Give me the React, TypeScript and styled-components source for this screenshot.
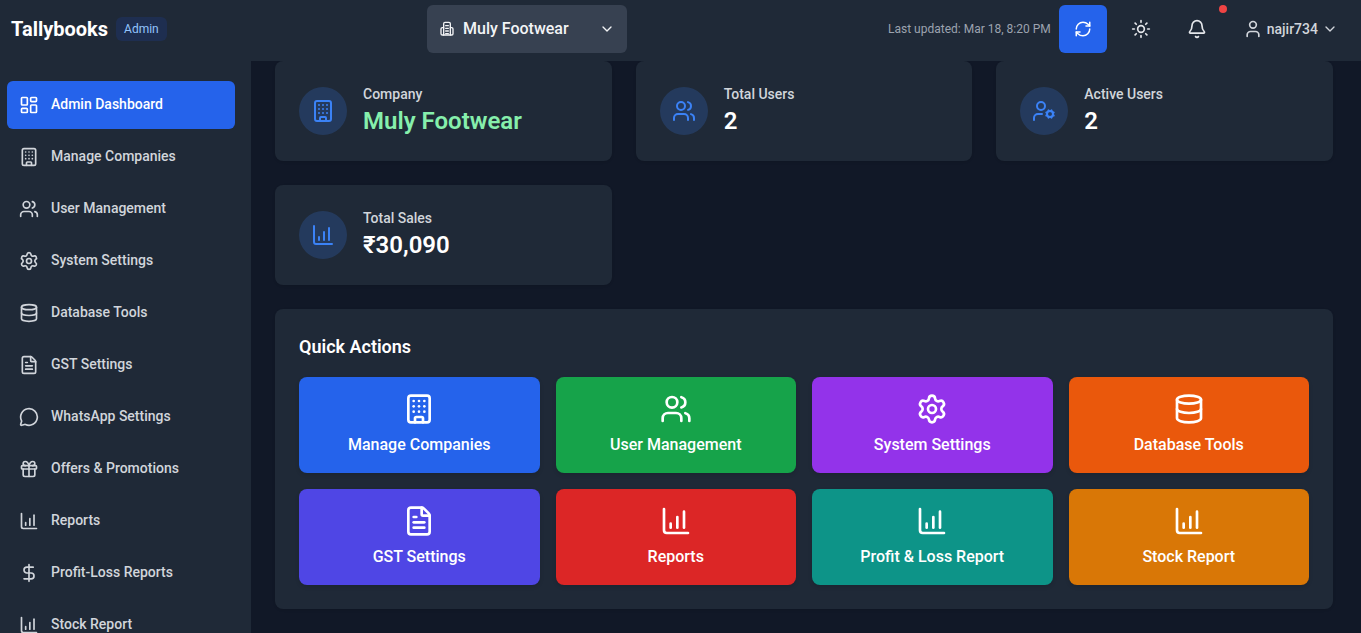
import React from "react";
import styled, { createGlobalStyle } from "styled-components";
import {
  LayoutDashboard, Building, Users, Settings, Database, FileText, MessageCircle, Gift,
  ChartColumnIncreasing, DollarSign, ChevronDown, RefreshCw, Sun, Bell, User, UserCog,
} from "lucide-react";

const Global = createGlobalStyle`
  html, body { margin: 0; padding: 0; height: 100%; overflow: hidden; background: #111827; }
  * { box-sizing: border-box; }
  body { font-family: Roboto, "Liberation Sans", sans-serif; -webkit-font-smoothing: antialiased; }
`;

const Shell = styled.div`
  width: 1361px; height: 633px; display: flex; flex-direction: column; overflow: hidden; background: #111827;
`;
const Header = styled.header`
  height: 61px; flex: none; background: #1f2937; display: flex; align-items: center; padding: 0 23px 3px 11px;
`;
const Brand = styled.div`width: 416px; flex: none; display: flex; align-items: center; gap: 8px;`;
const Logo = styled.span`font-size: 20px; font-weight: 700; color: #fff; line-height: 28px;`;
const Badge = styled.span`
  font-size: 12px; line-height: 16px; color: #93c5fd; padding: 4px 8px; border-radius: 6px; background: rgba(30, 58, 138, 0.3);
`;
const CompanySelect = styled.div`
  width: 200px; height: 48px; flex: none; background: #374151; border-radius: 6px; display: flex; align-items: center; padding: 0 12px; gap: 8px; color: #f3f4f6;
`;
const CompanyName = styled.span`flex: 1; font-size: 16px; font-weight: 500; line-height: 24px;`;
const HeaderRight = styled.div`flex: 1; display: flex; align-items: center; justify-content: flex-end;`;
const Updated = styled.span`font-size: 12px; color: #9ca3af; margin-right: 8px;`;
const RefreshButton = styled.div`
  width: 48px; height: 48px; margin-right: 2px; border-radius: 6px; background: #2563eb; display: flex; align-items: center; justify-content: center; color: #fff;
`;
const IconButton = styled.div`
  position: relative; width: 48px; height: 48px; margin-left: 8px; display: flex; align-items: center; justify-content: center; color: #e5e7eb;
`;
const Dot = styled.span`
  position: absolute; top: 0; right: -6px; width: 8px; height: 8px; border-radius: 50%; background: #ef4444;
`;
const UserMenu = styled.div`
  display: flex; align-items: center; gap: 4px; margin-left: 22px; color: #d1d5db; font-size: 14px; font-weight: 500;
`;
const Body = styled.div`flex: 1; display: flex; min-height: 0;`;
const Sidebar = styled.aside`
  width: 251px; flex: none; background: #1f2937; padding: 20px 12px 240px 7px; overflow-y: scroll; display: flex; flex-direction: column; gap: 4px;
  &::-webkit-scrollbar { width: 4px; }
  &::-webkit-scrollbar-track { background: #1f2937; }
  &::-webkit-scrollbar-thumb { background: #263241; }
`;
const NavItem = styled.div<{ $active?: boolean }>`
  flex: none; width: 228px; height: 48px; border-radius: 6px; display: flex; align-items: center; gap: 12px; padding: 0 12px;
  font-size: 14px; font-weight: 500; color: ${(p) => (p.$active ? "#fff" : "#d1d5db")}; background: ${(p) => (p.$active ? "#2563eb" : "transparent")};
`;
const NavLabel = styled.span`margin-bottom: 2px;`;
const Main = styled.main`flex: 1; padding: 0 28px 0 24px; display: flex; flex-direction: column; gap: 24px; overflow: hidden;`;
const StatGrid = styled.div`display: grid; grid-template-columns: repeat(3, 1fr); gap: 24px;`;
const StatCard = styled.div`
  height: 100px; background: #1f2937; border-radius: 8px; padding: 24px; display: flex; align-items: center; gap: 16px; box-shadow: 0 1px 3px rgba(0, 0, 0, 0.1);
`;
const StatIcon = styled.div`
  width: 48px; height: 48px; flex: none; border-radius: 50%; background: rgba(59, 130, 246, 0.2); display: flex; align-items: center; justify-content: center; color: #3b82f6;
`;
const StatText = styled.div`display: flex; flex-direction: column;`;
const StatLabel = styled.div`font-size: 14px; font-weight: 500; line-height: 20px; color: #d1d5db; margin: -1px 0 1px;`;
const StatValue = styled.div<{ $green?: boolean }>`
  font-size: 24px; font-weight: 600; line-height: 32px; color: ${(p) => (p.$green ? "#86efac" : "#fff")};
`;
const Panel = styled.section`background: #1f2937; border-radius: 8px; padding: 24px; height: 300px; box-shadow: 0 1px 3px rgba(0, 0, 0, 0.1);`;
const PanelTitle = styled.h2`margin: 0 0 16px; font-size: 18px; font-weight: 600; line-height: 28px; color: #fff;`;
const ActionGrid = styled.div`display: grid; grid-template-columns: repeat(4, 1fr); gap: 16px;`;
const ActionCard = styled.div<{ $bg: string }>`
  height: 96px; border-radius: 8px; background: ${(p) => p.$bg}; color: #fff; display: flex; flex-direction: column; align-items: center; justify-content: center; gap: 8px;
  font-size: 16px; font-weight: 500; line-height: 24px; box-shadow: 0 2px 4px rgba(0, 0, 0, 0.12);
`;

const OfficeIcon = () => (
  <svg width="16" height="16" viewBox="0 0 24 24" fill="none" stroke="currentColor" strokeWidth="2" strokeLinecap="round" strokeLinejoin="round">
    <path d="M7 21V4a2 2 0 0 1 2-2h6a2 2 0 0 1 2 2v17" />
    <path d="M7 10H5a2 2 0 0 0-2 2v7a2 2 0 0 0 2 2h14a2 2 0 0 0 2-2v-7a2 2 0 0 0-2-2h-2" />
    <path d="M10 7h4M10 11h4M10 15h4M10 19h4" />
  </svg>
);

const nav = [
  ["Admin Dashboard", LayoutDashboard], ["Manage Companies", Building], ["User Management", Users], ["System Settings", Settings],
  ["Database Tools", Database], ["GST Settings", FileText], ["WhatsApp Settings", MessageCircle], ["Offers & Promotions", Gift],
  ["Reports", ChartColumnIncreasing], ["Profit-Loss Reports", DollarSign], ["Stock Report", ChartColumnIncreasing],
] as const;
const actions = [
  ["Manage Companies", Building, "#2563eb"], ["User Management", Users, "#16a34a"], ["System Settings", Settings, "#9333ea"], ["Database Tools", Database, "#ea580c"],
  ["GST Settings", FileText, "#4f46e5"], ["Reports", ChartColumnIncreasing, "#dc2626"], ["Profit & Loss Report", ChartColumnIncreasing, "#0d9488"], ["Stock Report", ChartColumnIncreasing, "#d97706"],
] as const;

export default function App() {
  return (
    <Shell>
      <Global />
      <Header>
        <Brand><Logo>Tallybooks</Logo><Badge>Admin</Badge></Brand>
        <CompanySelect><OfficeIcon /><CompanyName>Muly Footwear</CompanyName><ChevronDown size={16} /></CompanySelect>
        <HeaderRight>
          <Updated>Last updated: Mar 18, 8:20 PM</Updated>
          <RefreshButton><RefreshCw size={18} /></RefreshButton>
          <IconButton><Sun size={20} /></IconButton>
          <IconButton><Bell size={20} /><Dot /></IconButton>
          <UserMenu><User size={20} /><span>najir734</span><ChevronDown size={16} /></UserMenu>
        </HeaderRight>
      </Header>
      <Body>
        <Sidebar>
          {nav.map(([label, Icon], i) => (
            <NavItem key={label} $active={i === 0}><Icon size={20} /><NavLabel>{label}</NavLabel></NavItem>
          ))}
        </Sidebar>
        <Main>
          <StatGrid>
            <StatCard><StatIcon><Building size={24} /></StatIcon><StatText><StatLabel>Company</StatLabel><StatValue $green>Muly Footwear</StatValue></StatText></StatCard>
            <StatCard><StatIcon><Users size={24} /></StatIcon><StatText><StatLabel>Total Users</StatLabel><StatValue>2</StatValue></StatText></StatCard>
            <StatCard><StatIcon><UserCog size={24} /></StatIcon><StatText><StatLabel>Active Users</StatLabel><StatValue>2</StatValue></StatText></StatCard>
            <StatCard><StatIcon><ChartColumnIncreasing size={24} /></StatIcon><StatText><StatLabel>Total Sales</StatLabel><StatValue>₹30,090</StatValue></StatText></StatCard>
          </StatGrid>
          <Panel>
            <PanelTitle>Quick Actions</PanelTitle>
            <ActionGrid>
              {actions.map(([label, Icon, bg]) => (
                <ActionCard key={label} $bg={bg}><Icon size={32} /><span>{label}</span></ActionCard>
              ))}
            </ActionGrid>
          </Panel>
        </Main>
      </Body>
    </Shell>
  );
}
